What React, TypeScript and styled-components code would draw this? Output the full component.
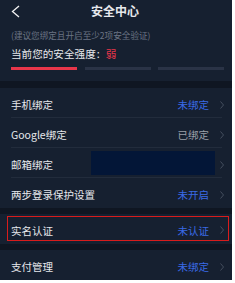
import styled, { createGlobalStyle } from "styled-components";

const colors = {
    page: "#ffffff",
    bg: "#162030",
    band: "#0f1622",
    divider: "#222c3c",
    text: "#e6e8ec",
    muted: "#6b7484",
    blue: "#3a6ae6",
    gray: "#9a9fa8",
    chevron: "#4a5363",
    red: "#e8364a",
    track: "#2a3346",
    mask: "#031637",
    mark: "#d81c1c",
};

const GlobalStyle = createGlobalStyle`
    html, body {
        margin: 0;
        padding: 0;
        background: ${colors.page};
    }
    * {
        box-sizing: border-box;
    }
`;

const Screen = styled.div`
    width: 232px;
    height: 280px;
    overflow: hidden;
    background: ${colors.bg};
    font-family: "Noto Sans CJK SC", "Noto Sans", sans-serif;
    color: ${colors.text};
    display: flex;
    flex-direction: column;
`;

const Header = styled.div`
    height: 22px;
    display: grid;
    grid-template-columns: 30px 1fr 30px;
    align-items: center;
`;

const BackButton = styled.div`
    display: flex;
    align-items: center;
    padding-left: 11px;
    height: 22px;
`;

const Title = styled.div`
    text-align: center;
    font-size: 12px;
    font-weight: 700;
    line-height: 22px;
    margin-left: -2px;
`;

const Summary = styled.div`
    padding: 7px 11px 0;
    height: 60px;
`;

const Hint = styled.div`
    font-size: 8.6px;
    line-height: 12px;
    color: ${colors.muted};
    white-space: nowrap;
`;

const Strength = styled.div`
    margin-top: 5px;
    font-size: 10.6px;
    line-height: 16px;
    white-space: nowrap;

    i {
        font-style: normal;
        margin: 0 6px 0 1px;
    }

    span {
        color: ${colors.red};
    }
`;

const Bars = styled.div`
    margin-top: 5px;
    display: grid;
    grid-template-columns: 66px 66px 66px;
    column-gap: 7.5px;
    width: 214px;
`;

const Bar = styled.div<{ $active?: boolean }>`
    height: 3px;
    background: ${(p) => (p.$active ? colors.red : colors.track)};
`;

const Band = styled.div<{ $h: number }>`
    height: ${(p) => p.$h}px;
    background: ${colors.band};
`;

const Group = styled.div`
    display: flex;
    flex-direction: column;
`;

const Row = styled.div<{ $last?: boolean }>`
    position: relative;
    height: 30px;
    display: flex;
    align-items: center;
    padding: 3px 8px 0 11px;

    &::after {
        content: "";
        display: ${(p) => (p.$last ? "none" : "block")};
        position: absolute;
        left: 11px;
        right: 10px;
        bottom: 0;
        height: 1px;
        background: ${colors.divider};
    }
`;

const Label = styled.div`
    flex: 1;
    font-size: 10.5px;
    white-space: nowrap;
`;

const Status = styled.div<{ $tone: "blue" | "gray" }>`
    font-size: 10.5px;
    color: ${(p) => (p.$tone === "blue" ? colors.blue : colors.gray)};
    margin-right: 11px;
    white-space: nowrap;
`;

const Chevron = styled.svg`
    width: 4px;
    height: 8px;
    flex: none;
`;

const Mask = styled.div`
    position: absolute;
    left: 91px;
    top: 3px;
    width: 124px;
    height: 24px;
    background: ${colors.mask};
`;

const Highlight = styled.div`
    position: absolute;
    left: 7px;
    top: 2px;
    right: 3px;
    bottom: 3px;
    border: 1.5px solid ${colors.mark};
    pointer-events: none;
`;

type Item = {
    label: string;
    status?: string;
    tone?: "blue" | "gray";
    masked?: boolean;
    marked?: boolean;
};

const firstGroup: Item[] = [
    { label: "手机绑定", status: "未绑定", tone: "blue" },
    { label: "Google绑定", status: "已绑定", tone: "gray" },
    { label: "邮箱绑定", masked: true },
    { label: "两步登录保护设置", status: "未开启", tone: "blue" },
];

const Arrow = () => (
    <Chevron viewBox="0 0 4 8">
        <polyline points="0.5,0.5 3.5,4 0.5,7.5" fill="none" stroke={colors.chevron} strokeWidth="0.9" />
    </Chevron>
);

const SettingRow = ({ item, last }: { item: Item; last?: boolean }) => (
    <Row $last={last}>
        <Label>{item.label}</Label>
        {item.status && <Status $tone={item.tone ?? "gray"}>{item.status}</Status>}
        <Arrow />
        {item.masked && <Mask />}
        {item.marked && <Highlight />}
    </Row>
);

export default function App() {
    return (
        <>
            <GlobalStyle />
            <Screen>
                <Header>
                    <BackButton>
                        <svg width="9" height="13" viewBox="0 0 9 13">
                            <polyline points="8,1 1.5,6.5 8,12" fill="none" stroke="#f2f2f2" strokeWidth="1.3" />
                        </svg>
                    </BackButton>
                    <Title>安全中心</Title>
                    <div />
                </Header>
                <Summary>
                    <Hint>(建议您绑定且开启至少2项安全验证)</Hint>
                    <Strength>
                        当前您的安全强度<i>:</i><span>弱</span>
                    </Strength>
                    <Bars>
                        <Bar $active />
                        <Bar />
                        <Bar />
                    </Bars>
                </Summary>
                <Band $h={7} />
                <Group>
                    {firstGroup.map((item, i) => (
                        <SettingRow key={item.label} item={item} last={i === firstGroup.length - 1} />
                    ))}
                </Group>
                <Band $h={6} />
                <SettingRow item={{ label: "实名认证", status: "未认证", tone: "blue", marked: true }} last />
                <Band $h={7} />
                <SettingRow item={{ label: "支付管理", status: "未绑定", tone: "blue" }} last />
            </Screen>
        </>
    );
}
